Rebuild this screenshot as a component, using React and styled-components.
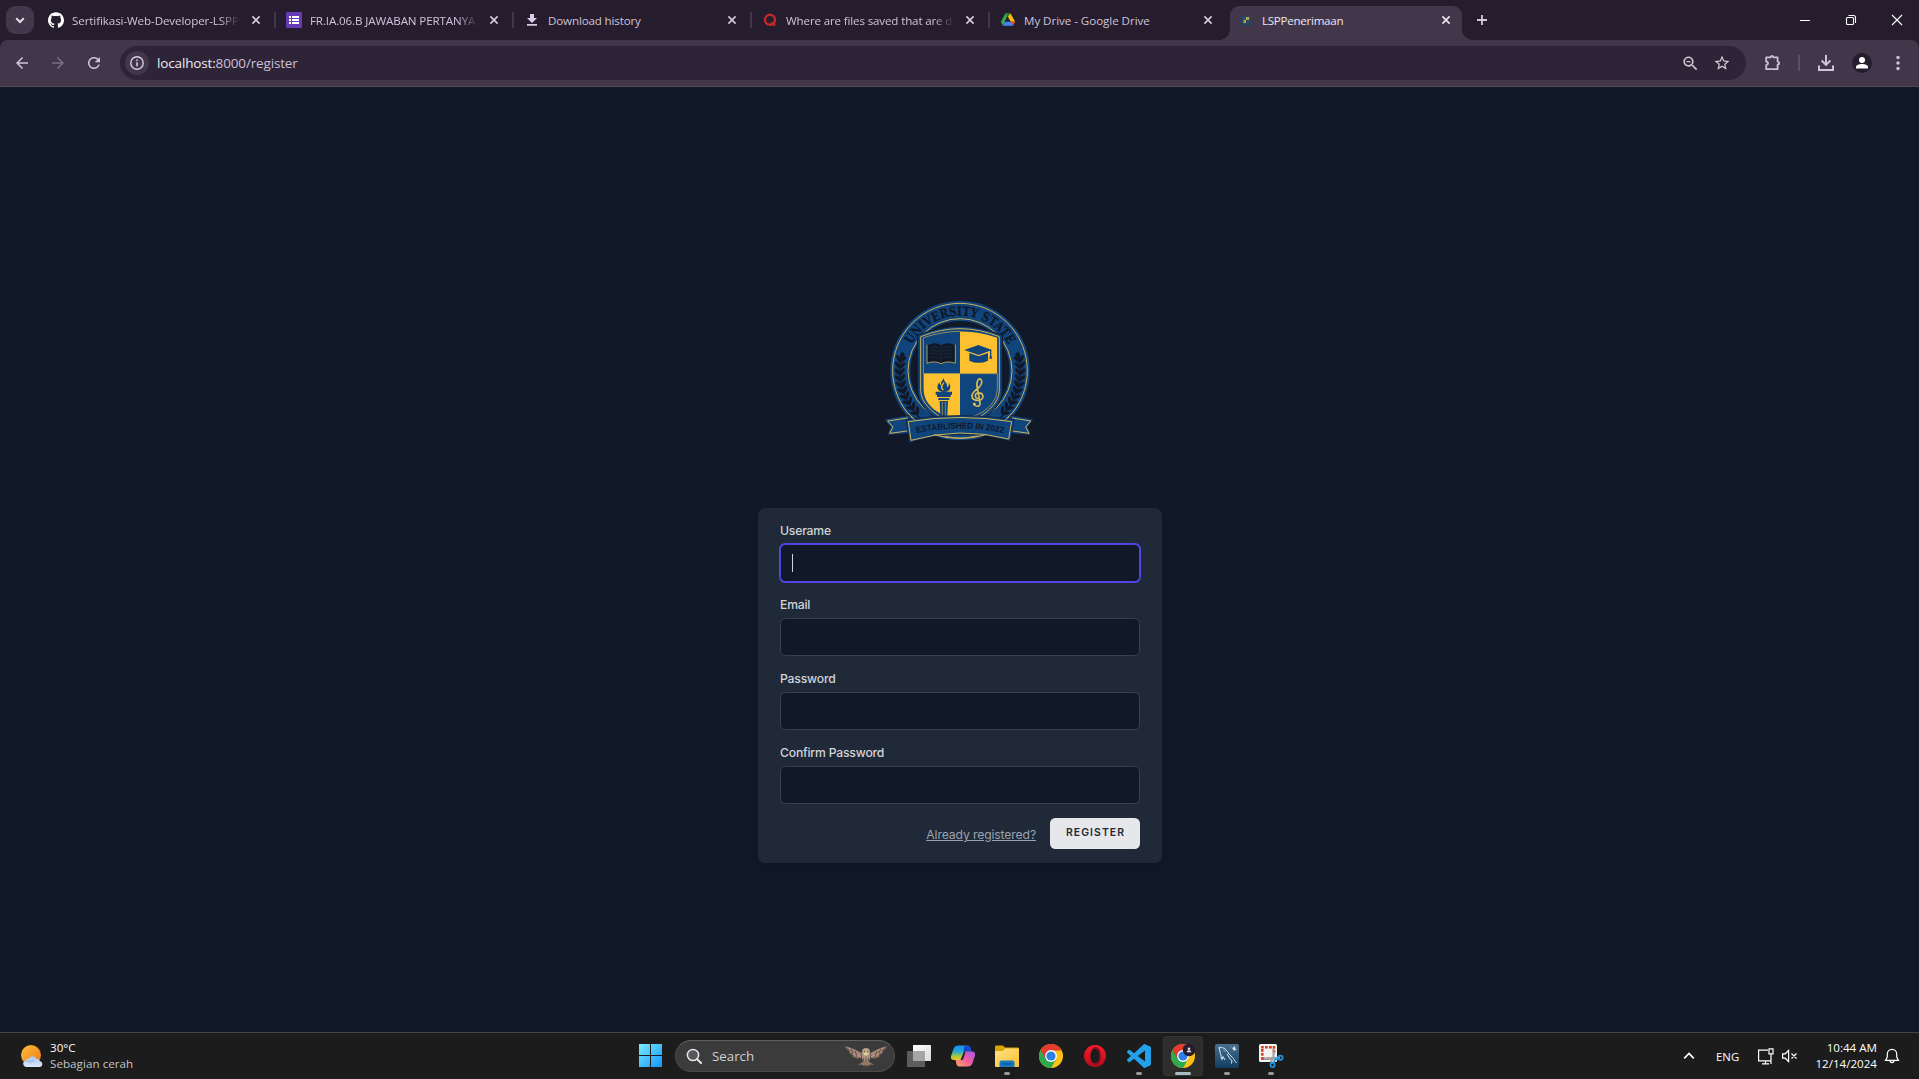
import React from "react";
import styled, { createGlobalStyle } from "styled-components";

const uiFont = `"Open Sans", "Noto Sans", sans-serif`;

const GlobalStyle = createGlobalStyle`
  *, *::before, *::after { box-sizing: border-box; }
  html, body, #root { height: 100%; margin: 0; }
  body { overflow: hidden; background: #111827; font-family: ${uiFont}; }
  svg { display: block; flex: none; }
`;

const Desktop = styled.div`
  height: 100vh;
  display: flex;
  flex-direction: column;
`;

/* ---------- Browser chrome ---------- */

const TabStrip = styled.div`
  height: 40px;
  flex: none;
  display: flex;
  align-items: center;
  background: #251c2e;
  padding-left: 6px;
`;

const TabSearch = styled.button`
  width: 28px;
  height: 28px;
  border: 0;
  border-radius: 9px;
  margin: 0 4px 0 0;
  padding: 0;
  background: #42374a;
  display: grid;
  place-items: center;
`;

const Tab = styled.div`
  position: relative;
  width: ${(p) => (p.$active ? 232 : 238)}px;
  height: ${(p) => (p.$active ? 34 : 28)}px;
  margin-left: ${(p) => (p.$active ? 2 : 0)}px;
  align-self: ${(p) => (p.$active ? "flex-end" : "center")};
  display: flex;
  align-items: center;
  padding: 0 0 ${(p) => (p.$active ? 6 : 0)}px ${(p) => (p.$active ? 8 : 10)}px;
  background: ${(p) => (p.$active ? "#42374a" : "transparent")};
  border-radius: 9px 9px 0 0;

  &::before, &::after {
    content: "";
    display: ${(p) => (p.$active ? "block" : "none")};
    position: absolute;
    bottom: 0;
    width: 10px;
    height: 10px;
  }
  &::before {
    left: -10px;
    background: radial-gradient(circle at 0 0, transparent 9.5px, #42374a 10px);
  }
  &::after {
    right: -10px;
    background: radial-gradient(circle at 100% 0, transparent 9.5px, #42374a 10px);
  }
`;

const TabTitle = styled.span`
  width: 168px;
  margin: 1px 8px 0;
  overflow: hidden;
  white-space: nowrap;
  font-size: 11.6px;
  letter-spacing: ${(p) => p.$spacing || -0.15}px;
  line-height: 18px;
  color: ${(p) => (p.$active ? "#ece4f0" : "#cfc3da")};
  mask-image: ${(p) => (p.$fade ? "linear-gradient(90deg, #000 148px, transparent 168px)" : "none")};
`;

const TabDivider = styled.i`
  width: 2px;
  height: 16px;
  margin-left: auto;
  background: #42374a;
`;

const NewTab = styled.div`
  margin-left: 12px;
`;

const WindowControls = styled.div`
  margin: 0 -1px 0 auto;
  display: flex;
  & > div {
    width: 46px;
    display: grid;
    place-items: center;
  }
`;

const ToolbarBack = styled.div`
  background: #251c2e;
  flex: none;
`;

const Toolbar = styled.div`
  height: 47px;
  display: flex;
  align-items: center;
  background: #42374a;
  border-bottom: 1px solid #514853;
  border-radius: 8px 8px 0 0;
`;

const ToolButton = styled.div`
  width: ${(p) => p.$w || 36}px;
  flex: none;
  display: grid;
  place-items: center;
  color: ${(p) => p.$color || "#d0c2dc"};
`;

const MenuButton = styled(ToolButton)`
  width: 47px;
  padding-left: 5px;
`;

const NavButtons = styled.div`
  width: 120px;
  flex: none;
  padding-left: 4px;
  display: flex;
`;

const Omnibox = styled.div`
  flex: 1;
  height: 34px;
  border-radius: 17px;
  background: #2d2437;
  display: flex;
  align-items: center;
  padding: 0 8px 0 5px;
`;

const SiteInfo = styled.div`
  width: 24px;
  height: 24px;
  border-radius: 50%;
  background: #42374a;
  display: grid;
  place-items: center;
`;

const Url = styled.div`
  flex: 1;
  margin-left: 8px;
  font-size: 13.5px;
  line-height: 20px;
  letter-spacing: -0.15px;
  color: #cdbfd6;
  span { color: #f0eaf4; }
`;

const ToolDivider = styled.i`
  width: 2px;
  height: 16px;
  flex: none;
  background: #5a4f63;
`;

const Avatar = styled.div`
  width: 20px;
  height: 20px;
  border-radius: 50%;
  background: #251c2e;
`;

/* ---------- Register page ---------- */

const Page = styled.main`
  flex: 1;
  min-height: 0;
  display: flex;
  flex-direction: column;
  align-items: center;
  background: #111827;
  padding: 203px 0 0 1px;
  font-family: Inter, "Open Sans", sans-serif;
`;

const LogoWrap = styled.div`
  height: 218px;
`;

const Card = styled.form`
  width: 404px;
  height: 355px;
  padding: 14.4px 22px;
  border-radius: 7.2px;
  background: #1f2937;
  box-shadow: 0 4px 6px -1px rgba(0, 0, 0, 0.1);
`;

const Field = styled.div`
  margin-bottom: 14.4px;
`;

const Label = styled.label`
  display: block;
  height: 21.8px;
  line-height: 17px;
  font-size: 12.2px;
  font-weight: 500;
  letter-spacing: -0.2px;
  color: #d1d5db;
`;

const Input = styled.div`
  height: 37.8px;
  padding: 0 11px;
  display: flex;
  align-items: center;
  background: #111827;
  border: 1px solid ${(p) => (p.$focused ? "#4f46e5" : "#374151")};
  border-radius: 5.4px;
  box-shadow: ${(p) => (p.$focused ? "0 0 0 1px #4f46e5" : "none")};
`;

const Caret = styled.i`
  width: 1px;
  height: 18px;
  background: #d1d5db;
`;

const Actions = styled.div`
  display: flex;
  align-items: center;
  justify-content: flex-end;
  margin-top: -0.6px;
`;

const LoginLink = styled.a`
  font-size: 12.2px;
  line-height: 18px;
  letter-spacing: -0.13px;
  margin-top: 4px;
  color: #9ca3af;
  text-decoration: underline;
`;

const RegisterButton = styled.button`
  width: 90px;
  height: 31px;
  margin: 0 0 0 14px;
  padding: 0 0 1px 1px;
  border: 0;
  border-radius: 5.4px;
  background: #e5e7eb;
  color: #1f2937;
  font: 600 10.4px/14px Inter, sans-serif;
  letter-spacing: 1.1px;
`;

/* ---------- Taskbar ---------- */

const Taskbar = styled.footer`
  height: 47px;
  flex: none;
  display: flex;
  align-items: center;
  background: #1c1c1c;
  border-top: 1px solid #444446;
  color: #fff;
`;

const Weather = styled.div`
  width: 631px;
  padding-left: 20px;
  display: flex;
  align-items: center;
  gap: 6px;
  font-size: 11.6px;
  line-height: 16px;
`;

const Muted = styled.div`
  color: #c4c4c4;
  letter-spacing: 0.05px;
`;

const Apps = styled.div`
  display: flex;
  gap: 4px;
  align-items: center;
`;

const AppButton = styled.div`
  position: relative;
  width: 40px;
  height: 40px;
  display: grid;
  place-items: center;
  border-radius: 4px;
  background: ${(p) => (p.$active ? "#2d2d2d" : "transparent")};
  box-shadow: ${(p) => (p.$active ? "inset 0 0 0 1px #343434" : "none")};

  &::after {
    content: "";
    display: ${(p) => (p.$open ? "block" : "none")};
    position: absolute;
    bottom: 1px;
    left: 50%;
    width: ${(p) => (p.$active ? 16 : 6)}px;
    height: 3px;
    border-radius: 2px;
    transform: translateX(-50%);
    background: ${(p) => (p.$active ? "#a9bcc1" : "#9a9a9a")};
  }
`;

const SearchBox = styled.div`
  width: 220px;
  height: 32px;
  padding: 0 6px 0 10px;
  display: flex;
  align-items: center;
  background: #3b3b3b;
  border: 1px solid #4a4a4a;
  border-top-color: #606060;
  border-radius: 16px;
  color: #cfcfcf;
  font-size: 13.3px;
  span { flex: 1; margin-left: 10px; }
`;

const Tray = styled.div`
  margin-left: auto;
  display: flex;
  align-items: center;
  padding-right: 19px;
`;

const Language = styled.div`
  width: 24px;
  margin: 1px 17px 0 20px;
  font-size: 11.4px;
  white-space: nowrap;
`;

const TrayPair = styled.div`
  display: flex;
  align-items: center;
  gap: 7px;
`;

const Clock = styled.div`
  width: 78px;
  margin-right: 7px;
  text-align: right;
  font-size: 11.6px;
  line-height: 16px;
`;

/* ---------- Icons ---------- */

const Glyph = ({ d, size = 20, fill = "currentColor", opacity }) => (
  <svg width={size} height={size} viewBox="0 0 24 24" fill={fill} opacity={opacity}>
    <path d={d} />
  </svg>
);

const Line = ({ d, w = 16, h = 16, sw = 1.5, color = "currentColor", cap = "butt" }) => (
  <svg width={w} height={h} viewBox={`0 0 ${w} ${h}`} fill="none" stroke={color} strokeWidth={sw} strokeLinecap={cap}>
    <path d={d} />
  </svg>
);

const arrowBack = "M20 11H7.83l5.59-5.59L12 4l-8 8 8 8 1.41-1.41L7.83 13H20v-2z";
const arrowForward = "M12 4l-1.41 1.41L16.17 11H4v2h12.17l-5.58 5.59L12 20l8-8z";
const reload =
  "M17.65 6.35C16.2 4.9 14.21 4 12 4c-4.42 0-7.99 3.58-7.99 8s3.57 8 7.99 8c3.73 0 6.84-2.55 7.73-6h-2.08c-.82 2.33-3.04 4-5.65 4-3.31 0-6-2.69-6-6s2.69-6 6-6c1.66 0 3.14.69 4.22 1.78L13 11h7V4l-2.35 2.35z";
const zoomOut =
  "M15.5 14h-.79l-.28-.27C15.41 12.59 16 11.11 16 9.5 16 5.91 13.09 3 9.5 3S3 5.91 3 9.5 5.91 16 9.5 16c1.61 0 3.09-.59 4.23-1.57l.27.28v.79l5 4.99L20.49 19l-4.99-5zm-6 0C7.01 14 5 11.99 5 9.5S7.01 5 9.5 5 14 7.01 14 9.5 11.99 14 9.5 14zM7 8.7h5v1.6H7z";
const star =
  "M22 9.24l-7.19-.62L12 2 9.19 8.63 2 9.24l5.46 4.73L5.82 21 12 17.27 18.18 21l-1.63-7.03L22 9.24zM12 15.4l-3.76 2.27 1-4.28-3.32-2.88 4.38-.38L12 6.1l1.71 4.04 4.38.38-3.32 2.88 1 4.28L12 15.4z";
const github =
  "M12 .297c-6.63 0-12 5.373-12 12 0 5.303 3.438 9.8 8.205 11.385.6.113.82-.258.82-.577 0-.285-.01-1.04-.015-2.04-3.338.724-4.042-1.61-4.042-1.61C4.422 18.07 3.633 17.7 3.633 17.7c-1.087-.744.084-.729.084-.729 1.205.084 1.838 1.236 1.838 1.236 1.07 1.835 2.809 1.305 3.495.998.108-.776.417-1.305.76-1.605-2.665-.3-5.466-1.332-5.466-5.93 0-1.31.465-2.38 1.235-3.22-.135-.303-.54-1.523.105-3.176 0 0 1.005-.322 3.3 1.23.96-.267 1.98-.399 3-.405 1.02.006 2.04.138 3 .405 2.28-1.552 3.285-1.23 3.285-1.23.645 1.653.24 2.873.12 3.176.765.84 1.23 1.91 1.23 3.22 0 4.61-2.805 5.625-5.475 5.92.42.36.81 1.096.81 2.22 0 1.606-.015 2.896-.015 3.286 0 .315.21.69.825.57C20.565 22.092 24 17.592 24 12.297c0-6.627-5.373-12-12-12";
const vscode =
  "M23.15 2.587L18.21.21a1.494 1.494 0 0 0-1.705.29l-9.46 8.63-4.12-3.128a.999.999 0 0 0-1.276.057L.327 7.261A1 1 0 0 0 .326 8.74L3.899 12 .326 15.26a1 1 0 0 0 .001 1.479L1.65 17.94a.999.999 0 0 0 1.276.057l4.12-3.128 9.46 8.63a1.492 1.492 0 0 0 1.704.29l4.942-2.377A1.5 1.5 0 0 0 24 20.06V3.939a1.5 1.5 0 0 0-.85-1.352zm-5.146 14.861L10.826 12l7.178-5.448v10.896z";

const CloseIcon = ({ color }) => (
  <Line d="M4.4 4.4l7.2 7.2M11.6 4.4l-7.2 7.2" sw={1.7} color={color} />
);

const FormsIcon = () => (
  <svg width="16" height="16" viewBox="0 0 16 16">
    <rect width="16" height="16" rx="1" fill="#673ab7" />
    <path d="M3 4h2v2H3zM6 4h7v2H6zM3 7h2v2H3zM6 7h7v2H6zM3 10h2v2H3zM6 10h7v2H6z" fill="#fff" />
  </svg>
);

const DownloadTabIcon = () => (
  <svg width="16" height="16" viewBox="0 0 16 16" fill="#d9cbe5">
    <path d="M6 2h4v4h3L8 11 3 6h3zM3 12h10v1.7H3z" />
  </svg>
);

const QuoraIcon = () => (
  <svg width="16" height="16" viewBox="0 0 16 16" fill="none" stroke="#c02a26">
    <circle cx="8" cy="7.8" r="5" strokeWidth="2.5" />
    <path d="M9 10.5l4.2 3.1" strokeWidth="2" />
  </svg>
);

const DriveIcon = () => (
  <svg width="16" height="16" viewBox="0 0 16 16">
    <path d="M5.4 1.2h3L4.6 10.2 3 13.8 0.8 10z" fill="#34a853" />
    <path d="M5.4 1.2h5L8 5.6z" fill="#188038" />
    <path d="M10.4 1.2l4.8 8.6h-4.4L7.9 4.8z" fill="#fbbc04" />
    <path d="M15.2 9.8l-2 4-2.6-4z" fill="#ea4335" />
    <path d="M5 9.8h6l2.2 4H3z" fill="#4285f4" />
  </svg>
);

const CrestFavicon = () => (
  <svg width="16" height="16" viewBox="0 0 16 16">
    <circle cx="8" cy="8" r="4.8" fill="#23486b" />
    <path d="M3 12.2h10v1H3z" fill="#1d4a6b" />
    <path d="M8 5h3v3H8zM5.5 8H8v3H5.500z" fill="#b9a044" />
    <path d="M5.5 5.4H8V8H5.500z" fill="#2c5a68" />
  </svg>
);

const InfoIcon = () => (
  <svg width="16" height="16" viewBox="0 0 16 16" fill="none" stroke="#d8cce2" strokeWidth="1.4">
    <circle cx="8" cy="8" r="6.2" />
    <path d="M8 7.2v4M8 4.5v1.6" strokeWidth="1.6" />
  </svg>
);

const ExtensionsIcon = () => (
  <svg width="20" height="20" viewBox="-1 0 20 20">
    <path
      d="M3.2 4.4h4.3c.1-1.6 2.9-1.6 3 0h4.1v4.2c2 .1 2 2.9 0 3v4.6H3.2v-4c2.5-.6 2.500-3.100 0-3.700z"
      fill="none"
      stroke="#cdbfdb"
      strokeWidth="1.8"
      strokeLinejoin="round"
    />
    <path d="M7.500 3.800a1.500 1.600 0 0 1 3 0zM15.300 8.700a1.600 1.500 0 0 1 0 3z" fill="#cdbfdb" />
  </svg>
);

const DownloadIcon = () => (
  <Line w={18} h={18} sw={2} color="#d0c2dc" d="M9 1v9.500M4.600 6.500L9 10.900l4.400-4.400M2 11.500V16h14v-4.500" />
);

const StartIcon = () => (
  <svg width="24" height="24" viewBox="0 0 24 24">
    <defs>
      <linearGradient id="win" x1="0" y1="0" x2="24" y2="24" gradientUnits="userSpaceOnUse">
        <stop stopColor="#7deaff" />
        <stop offset="1" stopColor="#0a93fb" />
      </linearGradient>
    </defs>
    <path d="M0 0h11v11H0zM12 0h11v11H12zM0 12h11v11H0zM12 12h11v11H12z" fill="url(#win)" />
  </svg>
);

const SearchIcon = () => (
  <svg width="16" height="16" viewBox="0 0 16 16" fill="none" stroke="#e6e6e6">
    <circle cx="7" cy="7" r="5.600" strokeWidth="1.500" fill="#55575c" />
    <path d="M11 11l4 4" strokeWidth="2" strokeLinecap="round" />
  </svg>
);

const OwlIcon = () => (
  <svg width="44" height="22" viewBox="0 0 44 22">
    <path d="M1 1c4 1 10 3 13 5l4 2-1 5c-3 1-7 0-9-2 1 0 1-1 1-1C6 9 5 8 5 7l1-.500C3 5 1 3 1 1z" fill="#8b6f62" />
    <path d="M43 1c-4 1-10 3-13 5l-4 2 1 5c3 1 7 0 9-2-1 0-1-1-1-1 3-1 4-2 4-3l-1-.500c3-1.500 5-3.500 5-5.500z" fill="#8b6f62" />
    <path d="M3 2.500c5 2 9 4 14 6.500M6 6l10 4.500M9 9.500l8 2M41 2.500c-5 2-9 4-14 6.500M38 6l-10 4.500M35 9.500l-8 2" stroke="#c3a795" fill="none" strokeWidth=".9" />
    <path d="M2 2l3 3M7 4l2 4M11 6l2 5M42 2l-3 3M37 4l-2 4M33 6l-2 5" stroke="#4f3b37" strokeWidth=".8" />
    <path d="M18 9h8c1 3 0 6-2 8h-4c-2-2-3-5-2-8z" fill="#a88d7c" />
    <path d="M20 16l-6 4 4-.5 1 1.500 2-1 1 2 1-2 2 1 1-1.500 4 .5-6-4z" fill="#927867" />
    <circle cx="22" cy="7" r="4" fill="#b5a18c" />
    <circle cx="22" cy="8" r="2.500" fill="#d8cd9a" />
    <circle cx="20.500" cy="6.700" r=".8" fill="#5d5320" />
    <circle cx="23.500" cy="6.700" r=".8" fill="#5d5320" />
    <path d="M19.500 13v3M22 13v4M24.500 13v3" stroke="#5e4840" strokeWidth=".8" />
  </svg>
);

const TaskViewIcon = () => (
  <svg width="24" height="24" viewBox="0 0 24 24">
    <defs>
      <linearGradient id="tv" x1="0" y1="0" x2="1" y2="1">
        <stop stopColor="#fff" />
        <stop offset="1" stopColor="#d9d9d9" />
      </linearGradient>
    </defs>
    <rect x="6" y="1" width="18" height="16" rx=".5" fill="url(#tv)" />
    <rect x="0" y="7" width="18" height="16" rx=".5" fill="#5d5d5d" />
    <rect x="6" y="7" width="12" height="10" fill="#a6a6a6" />
  </svg>
);

const CopilotIcon = () => (
  <svg width="26" height="24" viewBox="0 0 26 24">
    <defs>
      <linearGradient id="cpA" x1="0" y1="0" x2="0" y2="1">
        <stop stopColor="#1593f2" />
        <stop offset=".4" stopColor="#22a8d8" />
        <stop offset=".75" stopColor="#a9c93a" />
        <stop offset="1" stopColor="#f6c526" />
      </linearGradient>
      <linearGradient id="cpB" x1="1" y1="0" x2="0" y2="1">
        <stop stopColor="#a855f0" />
        <stop offset=".5" stopColor="#ee5c9c" />
        <stop offset="1" stopColor="#ffab5c" />
      </linearGradient>
    </defs>
    <path d="M12 1.500h5.500c1.800 0 2.600 1 3 2.500l1 3.500h-5c-1.500 0-2.600.8-3 2l-2 6.500H4C1.500 16 .5 14.500 1 12L3.500 5C4.300 2.600 6 1.500 8.500 1.500z" fill="url(#cpA)" />
    <path d="M14.500 1.500h3c1.800 0 2.600 1 3 2.500l1 3.500h-5c-1.500 0-2.600.5-3.200 1.500z" fill="#1548c7" />
    <path d="M14 22.500H9.500c-1.800 0-2.600-1-3-2.500l-1-4h5c1.500 0 2.400-.8 2.900-2.300l2-6.200H22c2.500 0 3.500 1.500 3 4L22.500 19c-.8 2.400-2.500 3.500-5 3.500z" fill="url(#cpB)" />
    <path d="M13.200 9.800l1-1.700c.5-.7 1.300-.8 2.300-.8h-1L13 15c-.5 1-1.500 1-2.500 1z" fill="#1c1c1c" />
  </svg>
);

const ExplorerIcon = () => (
  <svg width="24" height="24" viewBox="0 0 24 24">
    <defs>
      <linearGradient id="fold" x1="0" y1="0" x2="1" y2="1">
        <stop stopColor="#ffe08a" />
        <stop offset="1" stopColor="#fcc22d" />
      </linearGradient>
    </defs>
    <path d="M0 2.500Q0 1.500 1 1.500h7l2 2h13q1 0 1 1V9H0z" fill="#d9a300" />
    <path d="M0 7h8l2-2.500h13q1 0 1 1V22q0 1-1 1H1q-1 0-1-1z" fill="url(#fold)" />
    <path d="M4.500 23v-4.500q0-2 2-2h11q2 0 2 2V23z" fill="#1479c4" />
    <path d="M7.500 20h9" stroke="#0b5794" strokeWidth="1.500" />
  </svg>
);

const ChromeIcon = ({ badge }) => (
  <svg width="24" height="24" viewBox="0 0 24 24">
    <circle cx="12" cy="12" r="12" fill="#fbc116" />
    <path d="M12 12L1.600 6A12 12 0 0 0 12 24l5.200-9z" fill="#2da94f" />
    <path d="M12 6.500h10.700A12 12 0 0 0 1.500 6.200L7 15.200z" fill="#e33b2e" />
    <circle cx="12" cy="12" r="5.900" fill="#fff" />
    <circle cx="12" cy="12" r="4.600" fill="#2f7de9" />
    {badge && (
      <g>
        <circle cx="18" cy="6" r="6.200" fill="#251c2e" />
        <circle cx="18" cy="4.700" r="1.300" fill="#e8e4ea" />
        <path d="M15.700 8.300c0-2.800 4.600-2.800 4.600 0z" fill="#e8e4ea" />
      </g>
    )}
  </svg>
);

const OperaIcon = () => (
  <svg width="24" height="24" viewBox="0 0 24 24">
    <defs>
      <linearGradient id="op" x1="0" y1="0" x2="0" y2="1">
        <stop stopColor="#ff1b2d" />
        <stop offset="1" stopColor="#b00c1a" />
      </linearGradient>
    </defs>
    <path fillRule="evenodd" d="M12 1a11 11 0 1 1 0 22 11 11 0 0 1 0-22zm0 3.500c-2.700 0-4.500 3.300-4.500 7.500s1.800 7.500 4.500 7.500 4.700-3.300 4.700-7.500-2-7.500-4.700-7.500z" fill="url(#op)" />
    <path d="M8.500 5.500C12 .8 18 3 18 12s-6 11.200-9.500 6.500c5 2.500 8.200-1 8.200-6.500S13.500 3 8.500 5.500z" fill="#920b19" />
  </svg>
);

const WorkbenchIcon = () => (
  <svg width="24" height="24" viewBox="0 0 24 24">
    <defs>
      <linearGradient id="wb" x1="0" y1="0" x2="0" y2="1">
        <stop stopColor="#47708f" />
        <stop offset="1" stopColor="#123e63" />
      </linearGradient>
    </defs>
    <rect width="24" height="24" rx="2" fill="url(#wb)" />
    <path d="M4 3.500c3-1 7 1.500 9 5 2 3.200 4 4 5.500 6 1 1.500 1.500 3 3 4.500M4 3.500c1 2 .5 4 1.500 6s0 4 1.500 6l1-3 2 3.500M9 6.500l1 1M12 10c2 2 2 5 5 6.500l-.5 3" fill="none" stroke="#e5edf2" strokeWidth="1" />
    <path d="M16 2.500l1.800 1.500L20 2l.2 2.500 2 1-2 .2-1 1.500-.9-1.500z" fill="#dce6ed" />
  </svg>
);

const SnipIcon = () => (
  <svg width="26" height="26" viewBox="0 0 26 26">
    <rect x="1" y="1" width="18" height="18" rx="1.500" fill="#f1f3f5" />
    <path d="M3 4.300h14M4.300 6v11M4.300 15.700h12M16 3v8" stroke="#d5461b" strokeWidth="2.600" strokeDasharray="2.800 1.200" fill="none" />
    <path d="M15.500 6v8.500l-3 5M6 16l16-1.500" stroke="#9aa2a9" strokeWidth="2" fill="none" />
    <circle cx="14.500" cy="22" r="2.100" fill="none" stroke="#1f97e3" strokeWidth="1.700" />
    <circle cx="22.500" cy="14.800" r="2.100" fill="none" stroke="#1f97e3" strokeWidth="1.700" />
    <path d="M15.500 20l1.500-3.500 4-1" stroke="#1f97e3" strokeWidth="1.800" fill="none" />
  </svg>
);

const WeatherIcon = () => (
  <svg width="24" height="24" viewBox="0 0 24 24">
    <defs>
      <linearGradient id="sun" x1="0" y1="0" x2="1" y2="1">
        <stop stopColor="#fcc03a" />
        <stop offset="1" stopColor="#ee7716" />
      </linearGradient>
      <linearGradient id="cloud" x1="0" y1="0" x2="0" y2="1">
        <stop stopColor="#a9c6ef" />
        <stop offset="1" stopColor="#dbe8fb" />
      </linearGradient>
    </defs>
    <circle cx="11" cy="11" r="10" fill="url(#sun)" />
    <path d="M6 23a3.200 3.200 0 0 1-.3-6.300 3 3 0 0 1 3.300-2.200 4.300 4.300 0 0 1 7.800.4 2.800 2.800 0 0 1 3 2.200A3 3 0 0 1 20 23z" fill="url(#cloud)" />
    <path d="M6.500 17c2 0 3.500.8 4.500 2.500M10 17.500c1-.8 3-1 4.500.3" stroke="#7ea6dc" fill="none" strokeWidth=".8" />
  </svg>
);

const NetworkIcon = () => (
  <Line w={17} h={17} sw={1.200} color="#fff" d="M11 2.100H1.600v10.800h12.800M5 15.900h7M8.500 13v3M12 .8h4v5h-4zM14 6v10" />
);

const MutedIcon = () => (
  <Line w={18} h={14} sw={1.200} color="#fff" d="M1.600 4.800h2.600L7.600 1.500v11L4.200 9.200H1.600zM10.500 4.500l5 5M15.500 4.500l-5 5" />
);

const BellIcon = () => (
  <Line w={16} h={18} sw={1.200} color="#fff" d="M1.500 13.400h13L12.700 10V7a4.700 4.700 0 0 0-9.400 0v3zM6 13.600a2 2 0 0 0 4 0" />
);

/* ---------- University crest ---------- */

const NAVY = "#10447c";
const INK = "#111827";
const GOLD = "#c9b25c";
const YELLOW = "#fdc02f";

const leafAngles = [168, 174, 180, 186, 192, 198, 204, 210, 216, 222];

const Laurel = () => (
  <g fill={INK} stroke={INK}>
    <path d="M94 200C80 255 94 325 152 386" fill="none" strokeWidth="4" />
    <ellipse cx="97" cy="197" rx="7" ry="12" stroke="none" />
    {leafAngles.map((deg) => {
      const a = (deg * Math.PI) / 180;
      const x = 270 + 181 * Math.cos(a);
      const y = 240 - 181 * Math.sin(a);
      return (
        <g key={deg} transform={`translate(${x} ${y}) rotate(${180 - deg})`} stroke="none">
          <ellipse cx="-7" cy="-2" rx="5" ry="12" transform="rotate(-40)" />
          <ellipse cx="7" cy="-2" rx="5" ry="12" transform="rotate(40)" />
        </g>
      );
    })}
  </g>
);

const Crest = () => (
  <svg width="180" height="160" viewBox="0 -2 540 480">
    <defs>
      <path id="topArc" d="M113 189A165 165 0 0 1 427 189" />
      <path id="ribbonArc" d="M136 428Q270 399 404 428" />
      <clipPath id="field">
        <path d="M160 141Q218 122 270 122Q322 122 382 141V290C382 335 350 362 308 378L270 400L232 378C190 362 160 335 160 290Z" />
      </clipPath>
    </defs>

    <circle cx="270" cy="240" r="179" fill="none" stroke={NAVY} strokeWidth="60" />
    <circle cx="270" cy="240" r="202" fill="none" stroke={GOLD} strokeWidth="3" />
    <circle cx="270" cy="240" r="156" fill="none" stroke={GOLD} strokeWidth="3" />
    <text fontFamily="DejaVu Serif, serif" fontWeight="700" fontSize="38" fill={INK} stroke={INK} strokeWidth=".8">
      <textPath href="#topArc" startOffset="50%" textAnchor="middle" textLength="356" lengthAdjust="spacingAndGlyphs">
        UNIVERSITY STATE
      </textPath>
    </text>
    <Laurel />
    <g transform="translate(540 0) scale(-1 1)">
      <Laurel />
    </g>

    <path d="M143 134Q210 107 270 107Q330 107 397 134V295C397 345 360 380 270 420C180 380 143 345 143 295Z" fill={NAVY} stroke={INK} strokeWidth="3" />
    <path d="M152 138Q212 114 270 114Q328 114 388 138V295C388 340 350 372 270 412C190 372 152 340 152 295Z" fill="none" stroke={GOLD} strokeWidth="3" />
    <g clipPath="url(#field)">
      <rect x="150" y="110" width="120" height="139" fill={NAVY} />
      <rect x="270" y="110" width="120" height="139" fill={YELLOW} />
      <rect x="150" y="249" width="120" height="160" fill={YELLOW} />
      <rect x="270" y="249" width="120" height="160" fill={NAVY} />
    </g>
    <path d="M160 249V141Q218 122 270 122M270 249H382V290C382 335 350 362 308 378M160 249H270" fill="none" stroke={GOLD} strokeWidth="2" />

    {/* open book */}
    <path d="M171 162V218Q194 209 213 219Q234 209 256 218V162" fill={INK} stroke={GOLD} strokeWidth="2.500" />
    <path d="M176 162Q198 152 213 164Q230 152 251 162V211Q230 203 213 215Q196 203 176 211Z" fill={INK} />
    <path d="M213 164V217M182 170q14-5 26 2M182 180q14-5 26 2M182 190q14-5 26 2M182 200q14-5 26 2M218 172q14-7 27-2M218 182q14-7 27-2M218 192q14-7 27-2M218 202q14-7 27-2" fill="none" stroke="#233247" strokeWidth="2" />

    {/* graduation cap */}
    <g fill={NAVY}>
      <path d="M283 178L325 163L366 178L326 193Z" />
      <path d="M298 187L326 197L354 187V210Q326 223 298 210Z" />
      <path d="M360 178h4v16l3 10h-9l2-10z" />
    </g>

    {/* torch */}
    <g fill={NAVY}>
      <path d="M221 260c-2 13 14 17 10 30 6-3 6-8 5-14 10 13 4 28-14 28-20 0-25-16-14-29 1 6 3 8 6 9-4-11 6-14 7-24z" />
      <path d="M197 303h49v9h-4v7h-41v-7h-4zM205 322h33v6h-33zM209 331h25l-2 44h-21z" />
      <path d="M217 333v40M226 333v40" stroke={YELLOW} strokeWidth="1.500" />
    </g>
    <path d="M222 276c-8 9-10 16-2 22" fill="none" stroke={YELLOW} strokeWidth="4" />

    {/* treble clef */}
    <path
      d="M312 340C316 350 332 349 330 336L321 286C319 271 326 263 331 265C338 269 336 281 328 289C316 299 305 306 306 317C308 333 340 333 339 317C337 303 315 304 316 315C316 320 319 322 322 323"
      fill="none"
      stroke="#dcbc50"
      strokeWidth="5"
      strokeLinecap="round"
    />
    <circle cx="313" cy="340" r="4.500" fill="#dcbc50" />

    {/* ribbon */}
    <g fill={NAVY} stroke={INK} strokeWidth="2">
      <path d="M120 373L42 386L61 408L52 434L124 428Z" />
      <path d="M420 373L491 386L473 408L484 434L416 428Z" />
      <path d="M108 387Q270 362 432 387L421 452Q270 408 118 456Z" />
    </g>
    <g fill="none" stroke={GOLD} strokeWidth="3">
      <path d="M113 382L53 391L69 409L59 428L112 421" />
      <path d="M427 382L482 391L467 409L477 428L428 421" />
      <path d="M115 393Q270 368 425 393L416 445Q270 407 123 449Z" />
      <path d="M192 432Q270 455 348 432" />
      <path d="M116 369L135 389M424 369L405 389" />
    </g>
    <text fontFamily="Liberation Sans, sans-serif" fontWeight="700" fontSize="26" fill={INK}>
      <textPath href="#ribbonArc" startOffset="50%" textAnchor="middle" textLength="262" lengthAdjust="spacingAndGlyphs">
        ESTABLISHED IN 2022
      </textPath>
    </text>
  </svg>
);

/* ---------- App ---------- */

const tabs = [
  { title: "Sertifikasi-Web-Developer-LSPP", icon: <Glyph d={github} size={16} fill="#fff" />, fade: true, spacing: -0.1 },
  { title: "FR.IA.06.B JAWABAN PERTANYA", icon: <FormsIcon />, fade: true, spacing: -0.12 },
  { title: "Download history", icon: <DownloadTabIcon /> },
  { title: "Where are files saved that are d", icon: <QuoraIcon />, fade: true, spacing: -0.15 },
  { title: "My Drive - Google Drive", icon: <DriveIcon />, spacing: -0.05 },
  { title: "LSPPenerimaan", icon: <CrestFavicon />, active: true, spacing: -0.28 },
];

const fields = [
  { label: "Userame", focused: true },
  { label: "Email" },
  { label: "Password" },
  { label: "Confirm Password" },
];

const apps = [
  { icon: <TaskViewIcon /> },
  { icon: <CopilotIcon /> },
  { icon: <ExplorerIcon />, open: true },
  { icon: <ChromeIcon /> },
  { icon: <OperaIcon /> },
  { icon: <Glyph d={vscode} size={24} fill="#23a0ea" />, open: true },
  { icon: <ChromeIcon badge />, open: true, active: true },
  { icon: <WorkbenchIcon />, open: true },
  { icon: <SnipIcon />, open: true },
];

export default function App() {
  return (
    <Desktop>
      <GlobalStyle />
      <TabStrip>
        <TabSearch>
          <Line d="M4.200 6.200L8 10l3.800-3.800" sw={2} color="#e4dbea" />
        </TabSearch>
        {tabs.map((t, i) => (
          <Tab key={t.title} $active={t.active}>
            {t.icon}
            <TabTitle $active={t.active} $fade={t.fade} $spacing={t.spacing}>{t.title}</TabTitle>
            <CloseIcon color={t.active ? "#ece4f0" : "#d3c8dc"} />
            {i < 4 && <TabDivider />}
          </Tab>
        ))}
        <NewTab>
          <Line d="M8 3v10M3 8h10" sw={1.800} color="#d3c6de" />
        </NewTab>
        <WindowControls>
          <div><Line w={12} h={12} sw={1} color="#fff" d="M1 6.500h10" /></div>
          <div>
            <Line w={12} h={12} sw={1.100} color="#fff" d="M2.500 3.500h5q1 0 1 1v5q0 1-1 1h-5q-1 0-1-1v-5q0-1 1-1zM3.500 1.500h5q2 0 2 2v5.500" />
          </div>
          <div><Line w={12} h={12} sw={1.100} color="#fff" d="M1 1l10 10M11 1L1 11" /></div>
        </WindowControls>
      </TabStrip>

      <ToolbarBack>
        <Toolbar>
          <NavButtons>
            <ToolButton><Glyph d={arrowBack} size={18} /></ToolButton>
            <ToolButton $color="#7b6f85"><Glyph d={arrowForward} size={18} /></ToolButton>
            <ToolButton><Glyph d={reload} size={18} /></ToolButton>
          </NavButtons>
          <Omnibox>
            <SiteInfo><InfoIcon /></SiteInfo>
            <Url><span>localhost:</span>8000/register</Url>
            <ToolButton $w={32} $color="#c9c1cd"><Glyph d={zoomOut} size={19} /></ToolButton>
            <ToolButton $w={32} $color="#d3ccd6"><Glyph d={star} size={18} /></ToolButton>
          </Omnibox>
          <ToolButton $w={52}><ExtensionsIcon /></ToolButton>
          <ToolDivider />
          <ToolButton $w={52}><DownloadIcon /></ToolButton>
          <ToolButton $w={20}>
            <Avatar>
              <svg width="20" height="20" viewBox="0 0 20 20" fill="#fff">
                <circle cx="10" cy="7" r="3" />
                <path d="M4 15.500v-1.500c0-4 12-4 12 0v1.500z" />
              </svg>
            </Avatar>
          </ToolButton>
          <MenuButton>
            <svg width="4" height="16" viewBox="0 0 4 16" fill="#d0c2dc">
              <circle cx="2" cy="2.500" r="1.700" /><circle cx="2" cy="8" r="1.700" /><circle cx="2" cy="13.500" r="1.700" />
            </svg>
          </MenuButton>
        </Toolbar>
      </ToolbarBack>

      <Page>
        <LogoWrap><Crest /></LogoWrap>
        <Card>
          {fields.map((f) => (
            <Field key={f.label}>
              <Label>{f.label}</Label>
              <Input $focused={f.focused}>{f.focused && <Caret />}</Input>
            </Field>
          ))}
          <Actions>
            <LoginLink>Already registered?</LoginLink>
            <RegisterButton type="button">REGISTER</RegisterButton>
          </Actions>
        </Card>
      </Page>

      <Taskbar>
        <Weather>
          <WeatherIcon />
          <div>
            <div>30°C</div>
            <Muted>Sebagian cerah</Muted>
          </div>
        </Weather>
        <Apps>
          <AppButton><StartIcon /></AppButton>
          <SearchBox>
            <SearchIcon />
            <span>Search</span>
            <OwlIcon />
          </SearchBox>
          {apps.map((a, i) => (
            <AppButton key={i} $open={a.open} $active={a.active}>{a.icon}</AppButton>
          ))}
        </Apps>
        <Tray>
          <Line w={14} h={10} sw={1.700} color="#fff" d="M2.200 7.300L7 2.500l4.800 4.800" />
          <Language>ENG</Language>
          <TrayPair>
            <NetworkIcon />
            <MutedIcon />
          </TrayPair>
          <Clock>
            <div>10:44 AM</div>
            <div>12/14/2024</div>
          </Clock>
          <BellIcon />
        </Tray>
      </Taskbar>
    </Desktop>
  );
}
